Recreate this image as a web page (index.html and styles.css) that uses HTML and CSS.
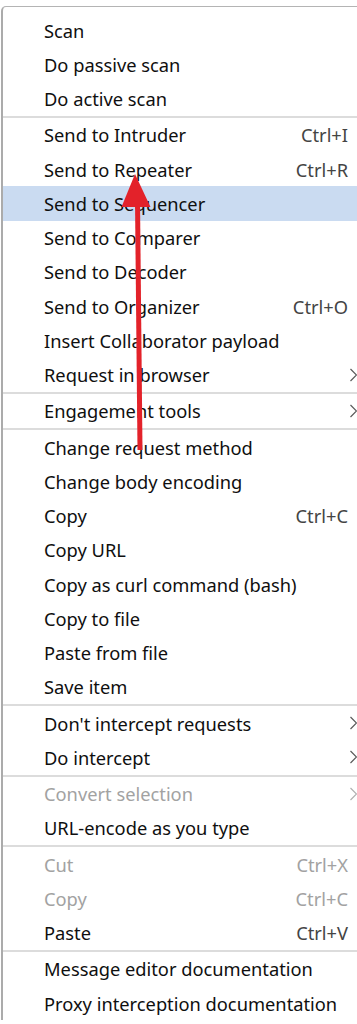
FILE: index.html
```html
<!DOCTYPE html>
<html lang="en">
<head>
    <meta charset="UTF-8">
    <meta name="viewport" content="width=device-width, initial-scale=1.0">
    <title>Context Menu</title>
    <link rel="stylesheet" href="styles.css">
</head>
<body>
    <div id="menu">
        <div class="item"><span>Scan</span></div>
        <div class="item"><span>Do passive scan</span></div>
        <div class="item"><span>Do active scan</span></div>
        <div class="sep"></div>
        <div class="item"><span>Send to Intruder</span><span class="key">Ctrl+I</span></div>
        <div class="item"><span>Send to Repeater</span><span class="key">Ctrl+R</span></div>
        <div class="item selected"><span>Send to Sequencer</span></div>
        <div class="item"><span>Send to Comparer</span></div>
        <div class="item"><span>Send to Decoder</span></div>
        <div class="item"><span>Send to Organizer</span><span class="key">Ctrl+O</span></div>
        <div class="item"><span>Insert Collaborator payload</span></div>
        <div class="item"><span>Request in browser</span><span class="sub"><svg viewBox="0 0 7 14"><polyline points="0.5,1 6.5,7 0.5,13"/></svg></span></div>
        <div class="sep"></div>
        <div class="item"><span>Engagement tools</span><span class="sub"><svg viewBox="0 0 7 14"><polyline points="0.5,1 6.5,7 0.5,13"/></svg></span></div>
        <div class="sep"></div>
        <div class="item"><span>Change request method</span></div>
        <div class="item"><span>Change body encoding</span></div>
        <div class="item"><span>Copy</span><span class="key">Ctrl+C</span></div>
        <div class="item"><span>Copy URL</span></div>
        <div class="item"><span>Copy as curl command (bash)</span></div>
        <div class="item"><span>Copy to file</span></div>
        <div class="item"><span>Paste from file</span></div>
        <div class="item"><span>Save item</span></div>
        <div class="sep"></div>
        <div class="item"><span>Don't intercept requests</span><span class="sub"><svg viewBox="0 0 7 14"><polyline points="0.5,1 6.5,7 0.5,13"/></svg></span></div>
        <div class="item"><span>Do intercept</span><span class="sub"><svg viewBox="0 0 7 14"><polyline points="0.5,1 6.5,7 0.5,13"/></svg></span></div>
        <div class="sep"></div>
        <div class="item disabled"><span>Convert selection</span><span class="sub"><svg viewBox="0 0 7 14"><polyline points="0.5,1 6.5,7 0.5,13"/></svg></span></div>
        <div class="item"><span>URL-encode as you type</span></div>
        <div class="sep"></div>
        <div class="item disabled"><span>Cut</span><span class="key">Ctrl+X</span></div>
        <div class="item disabled"><span>Copy</span><span class="key">Ctrl+C</span></div>
        <div class="item"><span>Paste</span><span class="key">Ctrl+V</span></div>
        <div class="sep"></div>
        <div class="item"><span>Message editor documentation</span></div>
        <div class="item"><span>Proxy interception documentation</span></div>
    </div>

    <!-- red annotation arrow drawn over the menu -->
    <svg class="arrow" width="357" height="1024" viewBox="0 0 357 1024">
        <line x1="140" y1="450" x2="137.5" y2="200" />
        <polygon points="135,174 121.5,207 150.5,207" />
    </svg>
</body>
</html>
```

FILE: styles.css
```css
body {
    margin: 0;
    padding: 0;
    background-color: #fff;
    font-family: "Noto Sans", "Open Sans", sans-serif;
    font-size: 18.3px;
    color: #0f0f0f;
    overflow: hidden;
    height: 1024px;
}

#menu {
    margin: 6px 0 0 1px;
    width: 354px;
    padding-top: 6px;
    background-color: #fff;
    border-top: 1px solid #b4b4b4;
    border-left: 2px solid #ababab;
    border-top-left-radius: 5px;
}

.item {
    display: grid;
    grid-template-columns: 1fr auto 9px;
    align-items: center;
    height: 34.25px;
    padding-left: 41px;
    white-space: nowrap;
}

.item .key {
    grid-column: 2;
    color: #444;
}

.item .sub {
    grid-column: 3;
    display: flex;
    align-items: center;
    padding-left: 2px;
}

.sub svg {
    width: 7px;
    height: 14px;
    fill: none;
    stroke: #5a5a5a;
    stroke-width: 1.2;
}

.selected {
    background-color: #cadbf1;
}

.disabled,
.disabled .key {
    color: #a2a2a2;
}

.disabled .sub svg {
    stroke: #b0b0b0;
}

.sep {
    height: 2px;
    background-color: #dcdcdc;
}

.arrow {
    position: absolute;
    left: 0;
    top: 0;
    pointer-events: none;
}

.arrow line {
    stroke: #e3222a;
    stroke-width: 5;
}

.arrow polygon {
    fill: #e3222a;
}
```
